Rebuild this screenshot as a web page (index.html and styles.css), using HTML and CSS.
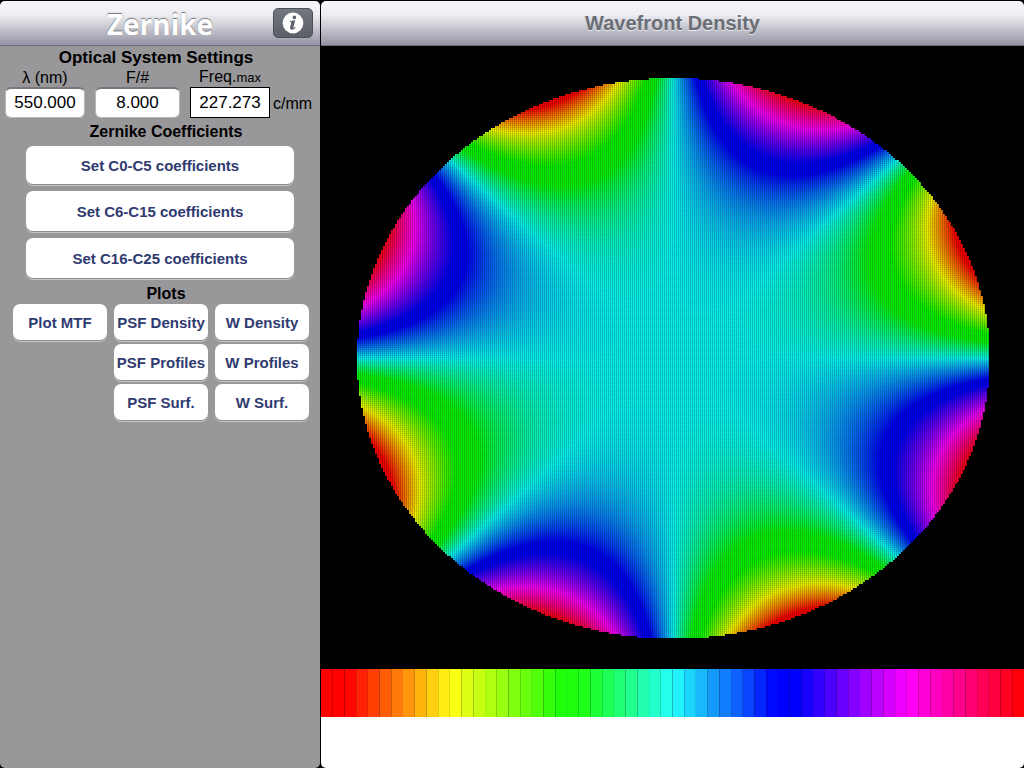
FILE: index.html
```html
<!DOCTYPE html>
<html lang="en">
<head>
  <meta charset="UTF-8" />
  <meta name="viewport" content="width=device-width, initial-scale=1" />
  <title>Zernike</title>
  <link rel="stylesheet" href="styles.css">
</head>
<body>
  <aside class="sidebar">
    <header class="bar">
      <h1 class="logo">Zernike</h1>
      <button class="info-btn" aria-label="Info">
        <svg width="22" height="22" viewBox="0 0 22 22">
          <circle cx="11" cy="11" r="10.4" fill="#fff" />
          <circle cx="12.4" cy="5.4" r="1.8" fill="#5d626c" />
          <path d="M8 9 L13.2 8.2 L11.4 15.4 Q11.2 16.6 13.2 14.8 L13.7 15.4 Q11.6 18 9.5 17.8 Q7.6 17.5 8.1 15.2 L9.4 10.5 Q9.5 9.8 7.9 9.9 Z" fill="#5d626c" />
        </svg>
      </button>
    </header>

    <h2>Optical System Settings</h2>
    <div class="settings">
      <div class="field">
        <label for="lambda">λ (nm)</label>
        <input type="text" id="lambda" value="550.000" />
      </div>
      <div class="field">
        <label for="fnum">F/#</label>
        <input type="text" id="fnum" value="8.000" />
      </div>
      <div class="field">
        <label for="freq">Freq.<small>max</small></label>
        <input type="text" id="freq" class="readout" value="227.273" readonly />
      </div>
      <span class="unit">c/mm</span>
    </div>

    <h2 class="section">Zernike Coefficients</h2>
    <div class="coefficients">
      <button class="btn">Set C0-C5 coefficients</button>
      <button class="btn tall">Set C6-C15 coefficients</button>
      <button class="btn tall">Set C16-C25 coefficients</button>
    </div>

    <h2 class="section plots-title">Plots</h2>
    <div class="plots">
      <div class="plot-col">
        <button class="btn">Plot MTF</button>
      </div>
      <div class="plot-col">
        <button class="btn">PSF Density</button>
        <button class="btn">PSF Profiles</button>
        <button class="btn">PSF Surf.</button>
      </div>
      <div class="plot-col">
        <button class="btn">W Density</button>
        <button class="btn">W Profiles</button>
        <button class="btn">W Surf.</button>
      </div>
    </div>
  </aside>

  <main class="detail">
    <header class="bar">
      <h2 class="title">Wavefront Density</h2>
    </header>
    <canvas id="density" class="density"></canvas>
    <canvas id="scale" class="scale"></canvas>
    <div class="footer"></div>
  </main>

  <script src="script.js"></script>
</body>
</html>
```
FILE: styles.css
```css
* {
  box-sizing: border-box;
}
body {
  margin: 0;
  padding-top: 1px;
  min-height: 100vh;
  display: flex;
  gap: 1px;
  background: #000;
  font-family: "Liberation Sans", Arial, Helvetica, sans-serif;
  color: #000;
}
.sidebar {
  flex: 0 0 320px;
  background: #98979a;
  border-radius: 5px;
  overflow: hidden;
}
.detail {
  flex: 1;
  min-width: 0;
  display: flex;
  flex-direction: column;
  border-radius: 5px;
  overflow: hidden;
}
.bar {
  position: relative;
  height: 45px;
  display: flex;
  align-items: center;
  justify-content: center;
  background: linear-gradient(#f5f5fa, #eeeef4 30%, #cfcfd6 55%, #9897a8 97%);
  border-bottom: 1px solid #6d6d78;
}
.logo {
  margin: 2px 0 0;
  font-family: "Open Sans", "Noto Sans", sans-serif;
  font-size: 28px;
  line-height: 38px;
  font-weight: bold;
  color: #fff;
  text-shadow: 0 -1px 1px #77777f;
}
.info-btn {
  position: absolute;
  right: 7px;
  top: 7px;
  width: 40px;
  height: 30px;
  padding: 0;
  display: flex;
  align-items: center;
  justify-content: center;
  background: linear-gradient(#72767f, #5b5f68);
  border: 1px solid #4c5058;
  border-radius: 5px;
}
h2 {
  margin: 0;
  text-align: center;
  font-size: 17px;
  line-height: 20px;
}
.title {
  font-size: 20px;
  line-height: 24px;
  color: #6a6d74;
  text-shadow: 0 1px 0 #e8e8ee;
}
.sidebar h2 {
  padding-top: 2px;
  padding-right: 8px;
}
.sidebar .section {
  padding-left: 12px;
  padding-right: 0;
  font-size: 16px;
}
.sidebar .plots-title {
  padding-top: 6px;
}
.settings {
  display: flex;
  align-items: flex-end;
  padding-left: 5px;
  gap: 10px;
  margin-bottom: 2px;
}
.field {
  display: flex;
  flex-direction: column;
  align-items: center;
}
.field label {
  font-size: 16px;
  line-height: 18px;
}
.field small {
  font-size: 13px;
}
.field input {
  width: 80px;
  height: 31px;
  padding: 0;
  text-align: center;
  font-family: inherit;
  font-size: 17px;
  background: #fff;
  border: 1px solid #b8b8bb;
  border-top: 2px solid #77777b;
  border-radius: 6px;
}
.field #fnum {
  width: 85px;
}
.field .readout {
  border: 1px solid #000;
  border-radius: 0;
}
.unit {
  margin-left: -7px;
  font-size: 16px;
  line-height: 28px;
}
.btn {
  height: 36px;
  padding: 0;
  font-family: inherit;
  font-size: 15px;
  font-weight: bold;
  white-space: nowrap;
  color: #2f3b70;
  background: #fff;
  border: none;
  border-radius: 7px;
  box-shadow: 0 1px 0 #8c8c90, 0 2px 0 #c6c6c9;
}
.coefficients {
  display: flex;
  flex-direction: column;
  gap: 7px;
  padding: 4px 26px 0;
}
.coefficients .btn {
  height: 38px;
}
.coefficients .tall {
  height: 40px;
}
.plots {
  display: flex;
  gap: 7px;
  padding: 0 11px 0 13px;
}
.plot-col {
  flex: 1;
  display: flex;
  flex-direction: column;
  gap: 4px;
}
.density {
  display: block;
  width: 100%;
  flex: 1;
  min-height: 0;
}
.scale {
  display: block;
  width: 100%;
  height: 48px;
}
.footer {
  height: 51px;
  background: #fff;
}
```
FILE: script.js
```javascript
// colour stops: value from 0 to 1
const SCALE_STOPS = [
  [0, 255, 0, 0],
  [0.03, 255, 0, 0],
  [0.18, 255, 255, 20],
  [0.34, 30, 255, 10],
  [0.37, 30, 255, 20],
  [0.5, 35, 255, 250],
  [0.65, 0, 0, 255],
  [0.68, 0, 0, 255],
  [0.84, 255, 0, 255],
  [1, 255, 0, 10]
];

const DENSITY_STOPS = [
  [0, 255, 0, 0],
  [0.03, 255, 0, 0],
  [0.18, 255, 255, 0],
  [0.33, 10, 255, 0],
  [0.39, 10, 255, 10],
  [0.5, 12, 255, 250],
  [0.64, 0, 0, 255],
  [0.68, 0, 0, 255],
  [0.84, 255, 0, 255],
  [1, 255, 0, 10]
];

function color(stops, v, shade = 1) {
  v = Math.min(1, Math.max(0, v));
  let i = 1;
  while (i < stops.length - 1 && v > stops[i][0]) i++;
  const a = stops[i - 1];
  const b = stops[i];
  const t = (v - a[0]) / (b[0] - a[0]);
  const c = [1, 2, 3].map(k => Math.round((a[k] + (b[k] - a[k]) * t) * shade));
  return `rgb(${c.join(',')})`;
}

function prepare(id) {
  const canvas = document.getElementById(id);
  canvas.width = canvas.clientWidth;
  canvas.height = canvas.clientHeight;
  const ctx = canvas.getContext('2d');
  ctx.fillStyle = '#000';
  ctx.fillRect(0, 0, canvas.width, canvas.height);
  return ctx;
}

// wavefront: r^4 * sin(4 * theta) over the pupil
function drawDensity() {
  const ctx = prepare('density');
  const { width, height } = ctx.canvas;
  const cell = 2;
  const cx = width / 2 + 1;
  const cy = height / 2 + 1;
  for (let px = 0; px < width; px += cell) {
    for (let py = 0; py < height; py += cell) {
      const x = (px + 1 - cx) / (width * 0.45);
      const y = (cy - py - 1) / (height * 0.45);
      const r = Math.hypot(x, y);
      if (r > 1) continue;
      const value = 0.5 - Math.pow(r, 4) * Math.sin(4 * Math.atan2(y, x)) / 2;
      ctx.fillStyle = color(DENSITY_STOPS, value, 0.94);
      ctx.fillRect(px, py, cell, cell);
      // darker seam on the right of each cell
      ctx.fillStyle = color(DENSITY_STOPS, value, 0.77);
      ctx.fillRect(px + 1, py, 1, cell);
    }
  }
  // faint seams between rows
  ctx.fillStyle = 'rgba(0, 0, 0, 0.05)';
  for (let py = 1; py < height; py += cell) {
    ctx.fillRect(0, py, width, 1);
  }
}

function drawScale() {
  const ctx = prepare('scale');
  const n = 60;
  const w = ctx.canvas.width / n;
  for (let i = 0; i < n; i++) {
    ctx.fillStyle = color(SCALE_STOPS, i / (n - 1));
    ctx.fillRect(i * w, 0, w, ctx.canvas.height);
  }
}

drawDensity();
drawScale();
```
